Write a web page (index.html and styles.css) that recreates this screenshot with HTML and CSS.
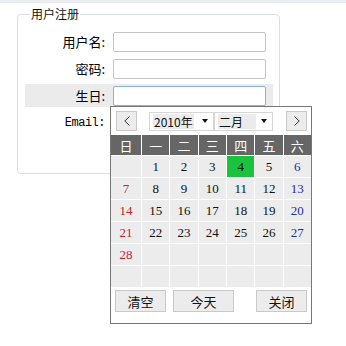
FILE: index.html
```html
<!DOCTYPE html>
<html lang="zh-CN">
<head>
    <meta charset="UTF-8">
    <title>用户注册</title>
    <link rel="stylesheet" href="styles.css">
</head>
<body>
    <div class="topbar"></div>

    <fieldset class="reg">
        <legend>用户注册</legend>
        <div class="row">
            <label for="name">用户名:</label>
            <input type="text" id="name">
        </div>
        <div class="row">
            <label for="pwd">密码:</label>
            <input type="password" id="pwd">
        </div>
        <div class="row active">
            <label for="birth">生日:</label>
            <input type="text" id="birth" class="focus">
        </div>
        <div class="row">
            <label class="mono" for="email">Email:</label>
            <input type="text" id="email">
        </div>
    </fieldset>

    <!-- date picker popup -->
    <div class="cal">
        <div class="cal-nav">
            <span class="nav-btn">
                <svg width="6" height="10" viewBox="0 0 6 10"><polyline points="5.5,0.5 0.8,5 5.5,9.5" fill="none" stroke="#333" stroke-width="1"/></svg>
            </span>
            <span class="sel year"><span class="sel-text">2010年</span><i class="arrow"></i></span>
            <span class="sel month"><span class="sel-text">二月</span><i class="arrow"></i></span>
            <span class="nav-btn next">
                <svg width="6" height="10" viewBox="0 0 6 10"><polyline points="0.5,0.5 5.2,5 0.5,9.5" fill="none" stroke="#333" stroke-width="1"/></svg>
            </span>
        </div>

        <div class="cal-grid">
            <div class="wk">日</div><div class="wk">一</div><div class="wk">二</div><div class="wk">三</div><div class="wk">四</div><div class="wk">五</div><div class="wk">六</div>

            <div class="day"></div><div class="day">1</div><div class="day">2</div><div class="day">3</div><div class="day today">4</div><div class="day">5</div><div class="day sat">6</div>
            <div class="day sun">7</div><div class="day">8</div><div class="day">9</div><div class="day">10</div><div class="day">11</div><div class="day">12</div><div class="day sat">13</div>
            <div class="day sun">14</div><div class="day">15</div><div class="day">16</div><div class="day">17</div><div class="day">18</div><div class="day">19</div><div class="day sat">20</div>
            <div class="day sun">21</div><div class="day">22</div><div class="day">23</div><div class="day">24</div><div class="day">25</div><div class="day">26</div><div class="day sat">27</div>
            <div class="day sun">28</div><div class="day"></div><div class="day"></div><div class="day"></div><div class="day"></div><div class="day"></div><div class="day"></div>
            <div class="day"></div><div class="day"></div><div class="day"></div><div class="day"></div><div class="day"></div><div class="day"></div><div class="day"></div>
        </div>

        <div class="cal-foot">
            <button class="btn">清空</button>
            <button class="btn wide">今天</button>
            <button class="btn">关闭</button>
        </div>
    </div>
</body>
</html>
```

FILE: styles.css
```css
/* Global Styles */
* {
    box-sizing: border-box;
}
body {
    margin: 0;
    background: #fff;
    font-family: "Noto Sans CJK SC", "Noto Sans", sans-serif;
    font-size: 12px;
    color: #111;
    position: relative;
    height: 346px;
}
.topbar {
    height: 3px;
    background: #e9ecf0;
}

/* Register form */
.reg {
    margin: 3px 0 0 17px;
    width: 263px;
    padding: 8px 6px 35px 7px;
    border: 1px solid #d8dee2;
    border-radius: 4px;
}
.reg legend {
    margin-left: 5px;
    padding: 0 1px;
    font-size: 12px;
    line-height: 16px;
    color: #111;
}
.row {
    display: flex;
    align-items: center;
    height: 23px;
    margin-bottom: 4px;
}
.row.active {
    background: #ebebeb;
}
.row label {
    width: 80px;
    text-align: right;
    font-size: 13px;
    line-height: 16px;
    color: #000;
}
.row label.mono {
    font-family: "Liberation Mono", monospace;
    font-size: 12px;
    letter-spacing: -0.5px;
}
.row input {
    margin-left: 8px;
    width: 153px;
    height: 20px;
    border: 1px solid #c4c4c4;
    border-radius: 2px;
    background: #fff;
    padding: 0 3px;
    outline: none;
}
.row input.focus {
    border-color: #86b4dd;
}

/* Calendar popup */
.cal {
    position: absolute;
    left: 110px;
    top: 106px;
    width: 202px;
    height: 218px;
    border: 1px solid #777;
    background: #fff;
}
.cal-nav {
    display: flex;
    align-items: center;
    height: 20px;
    margin: 4px 4px 0 5px;
}
.nav-btn {
    width: 21px;
    height: 20px;
    background: #ececec;
    border: 1px solid #c9c9c9;
    display: flex;
    align-items: center;
    justify-content: center;
}
.nav-btn.next {
    margin-left: auto;
}
.sel {
    display: flex;
    align-items: center;
    height: 19px;
    border: 1px solid #d6d6d6;
    background: #fff;
    padding-left: 3px;
    white-space: nowrap;
}
.sel.year {
    margin-left: 12px;
    width: 65px;
}
.sel.month {
    width: 59px;
}
.sel-text {
    background: #ebebeb;
    font-size: 12px;
    line-height: 15px;
    padding: 0 1px;
    color: #111;
}
.sel.month .sel-text {
    width: 38px;
}
.arrow {
    margin-left: auto;
    margin-right: 5px;
    width: 0;
    height: 0;
    border-left: 3.5px solid transparent;
    border-right: 3.5px solid transparent;
    border-top: 4px solid #111;
}
.cal-grid {
    display: grid;
    grid-template-columns: 30px repeat(6, 1fr);
    grid-template-rows: 20px repeat(6, 21px);
    gap: 1px;
    margin-top: 4px;
    background: #fff;
}
.wk {
    background: #666;
    color: #fff;
    font-size: 13px;
    display: flex;
    align-items: center;
    justify-content: center;
}
.day {
    background: #ececec;
    font-family: "Liberation Serif", serif;
    font-size: 13px;
    color: #111;
    display: flex;
    align-items: center;
    justify-content: center;
}
.day.sun {
    color: #c8242c;
}
.day.sat {
    color: #1f2f9e;
}
.day.today {
    background: #1bc23d;
}
.cal-foot {
    display: flex;
    margin: 3px 0 0 4px;
}
.btn {
    height: 22px;
    width: 51px;
    margin: 0;
    padding: 0;
    border: 1px solid #c9c9c9;
    background: #ececec;
    font-family: "Noto Sans CJK SC", sans-serif;
    font-size: 13px;
    color: #111;
}
.btn.wide {
    width: 61px;
    margin: 0 22px 0 7px;
}
```
